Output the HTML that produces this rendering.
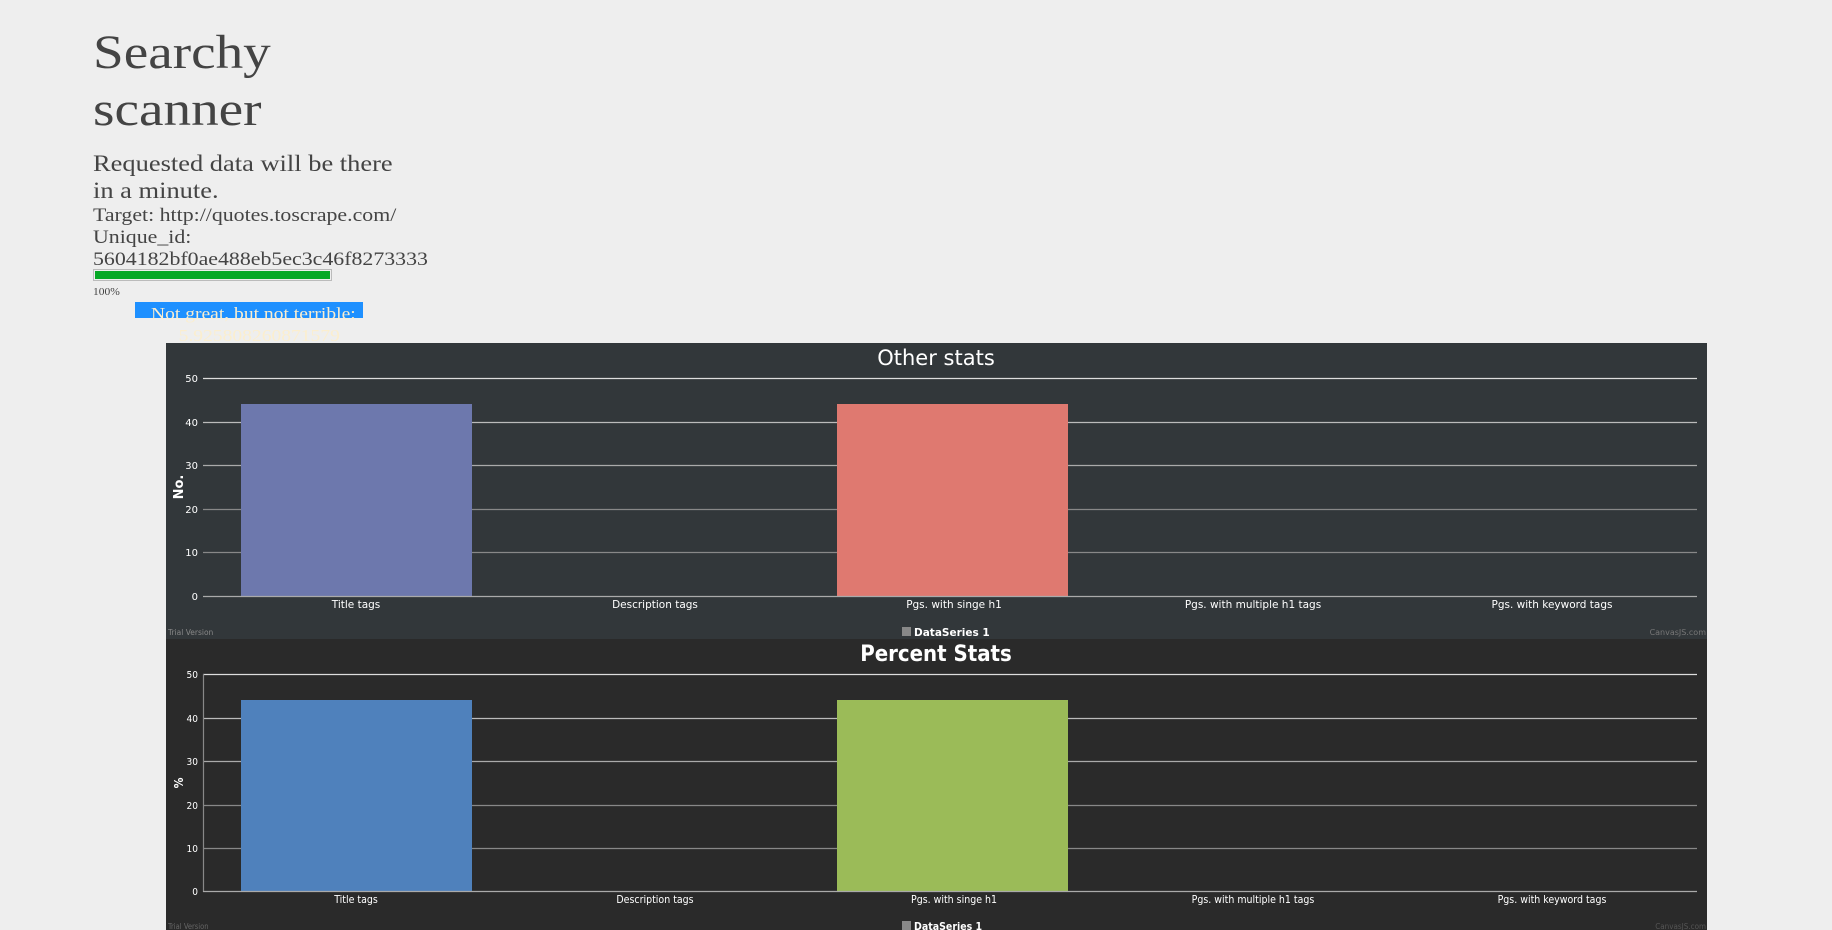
<!DOCTYPE html>
<html><head><meta charset="utf-8">
<style>
html,body{margin:0;padding:0;background:#eeeeee;width:1832px;height:930px;overflow:hidden;position:relative;font-family:"Liberation Serif","DejaVu Serif",serif;color:#444}
.a{position:absolute;white-space:nowrap}
.s{transform:scaleX(1.15);transform-origin:0 0}
</style></head><body>
<div class="a s" style="left:93px;top:24px;font-size:48px;line-height:57px;color:#444">Searchy<br>scanner</div>
<div class="a s" style="left:93px;top:150px;font-size:23px;line-height:27px;color:#444">Requested data will be there<br>in a minute.</div>
<div class="a s" style="left:93px;top:205px;font-size:19px;line-height:22px;color:#444">Target: http://quotes.toscrape.com/<br>Unique_id:<br>5604182bf0ae488eb5ec3c46f8273333</div>
<div class="a" style="left:93px;top:269px;width:237px;height:10px;border:1px solid #bbb;background:#eee"><div style="margin:1px;height:8px;background:#06a826"></div></div>
<div class="a s" style="left:93px;top:287px;font-size:10px;color:#444">100%</div>
<div class="a" style="left:135px;top:302px;width:228px;height:16px;background:#1e90ff;overflow:visible"></div>
<div class="a s" style="left:151px;top:303px;font-size:17px;line-height:22px;color:#fbeecf">Not great, but not terrible:<br><span style="margin-left:24px">5.925808260871579</span></div>

<svg class="a" style="left:166px;top:343px" width="1541" height="296" font-family="'DejaVu Sans','Liberation Sans',sans-serif">
<rect width="1541" height="296" fill="#32373a"/>
<text x="770" y="22" fill="#fff" font-size="21" text-anchor="middle">Other stats</text>
<g stroke-width="1.2">
<line x1="37" x2="1531" y1="35.5" y2="35.5" stroke="#ddd"/>
<line x1="37" x2="1531" y1="79.5" y2="79.5" stroke="#bbb"/>
<line x1="37" x2="1531" y1="122.5" y2="122.5" stroke="#aaa"/>
<line x1="37" x2="1531" y1="166.5" y2="166.5" stroke="#888"/>
<line x1="37" x2="1531" y1="209.5" y2="209.5" stroke="#888"/>
</g>
<rect x="75" y="61" width="231" height="192" fill="#6d78ad"/>
<rect x="671" y="61" width="231" height="192" fill="#df7970"/>
<line x1="37" x2="1531" y1="253.5" y2="253.5" stroke="#aaa" stroke-width="1.2"/>
<g fill="#fff" font-size="10" text-anchor="end">
<text x="32" y="39">50</text><text x="32" y="83">40</text><text x="32" y="126">30</text><text x="32" y="170">20</text><text x="32" y="213">10</text><text x="32" y="257">0</text></g>
<text transform="translate(17,144) rotate(-90)" fill="#fff" font-size="13" font-weight="bold" text-anchor="middle">No.</text>
<g fill="#fff" font-size="10.5" text-anchor="middle">
<text x="190" y="265">Title tags</text><text x="489" y="265">Description tags</text><text x="788" y="265">Pgs. with singe h1</text><text x="1087" y="265">Pgs. with multiple h1 tags</text><text x="1386" y="265">Pgs. with keyword tags</text></g>
<rect x="736" y="284" width="9" height="9" fill="#888"/>
<text x="748" y="293" fill="#fff" font-size="10.5" font-weight="bold">DataSeries 1</text>
<text x="2" y="292" fill="#888" font-size="7.5">Trial Version</text>
<text x="1540" y="292" fill="#777" font-size="8" text-anchor="end">CanvasJS.com</text>
</svg>

<svg class="a" style="left:166px;top:639px" width="1541" height="291" font-family="'Liberation Sans Narrow','DejaVu Sans Condensed','Liberation Sans',sans-serif">
<rect width="1541" height="291" fill="#2a2a2a"/>
<text x="770" y="22" fill="#fff" font-size="22" font-weight="bold" text-anchor="middle" font-family="Impact,'DejaVu Sans Condensed','Liberation Sans Narrow',sans-serif" style="font-stretch:condensed">Percent Stats</text>
<g stroke-width="1.2">
<line x1="37" x2="1531" y1="35.5" y2="35.5" stroke="#ddd"/>
<line x1="37" x2="1531" y1="79.5" y2="79.5" stroke="#bbb"/>
<line x1="37" x2="1531" y1="122.5" y2="122.5" stroke="#aaa"/>
<line x1="37" x2="1531" y1="166.5" y2="166.5" stroke="#888"/>
<line x1="37" x2="1531" y1="209.5" y2="209.5" stroke="#888"/>
<line x1="37.5" x2="37.5" y1="35" y2="253" stroke="#888"/>
</g>
<rect x="75" y="61" width="231" height="192" fill="#4f81bc"/>
<rect x="671" y="61" width="231" height="192" fill="#9bbb58"/>
<line x1="37" x2="1531" y1="252.5" y2="252.5" stroke="#aaa" stroke-width="1.2"/>
<g fill="#fff" font-size="10" text-anchor="end">
<text x="32" y="39">50</text><text x="32" y="83">40</text><text x="32" y="126">30</text><text x="32" y="170">20</text><text x="32" y="213">10</text><text x="32" y="256">0</text></g>
<text transform="translate(17,144) rotate(-90)" fill="#fff" font-size="12" font-weight="bold" text-anchor="middle">%</text>
<g fill="#fff" font-size="10.5" text-anchor="middle">
<text x="190" y="264">Title tags</text><text x="489" y="264">Description tags</text><text x="788" y="264">Pgs. with singe h1</text><text x="1087" y="264">Pgs. with multiple h1 tags</text><text x="1386" y="264">Pgs. with keyword tags</text></g>
<rect x="736" y="282" width="9" height="9" fill="#888"/>
<text x="748" y="291" fill="#fff" font-size="10.5" font-weight="bold">DataSeries 1</text>
<text x="2" y="290" fill="#666" font-size="7.5">Trial Version</text>
<text x="1540" y="290" fill="#555" font-size="8" text-anchor="end">CanvasJS.com</text>
</svg>
</body></html>
